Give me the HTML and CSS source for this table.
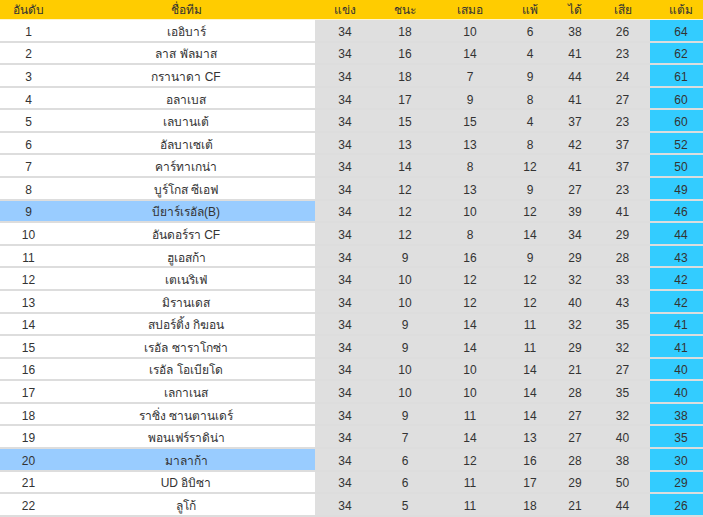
FILE: index.html
```html
<!DOCTYPE html>
<html lang="th">
<head>
<meta charset="utf-8">
<title>ตารางคะแนน</title>
<link rel="stylesheet" href="styles.css">
</head>
<body>
<div class="table">
  <div class="row head">
    <div class="c">อันดับ</div><div class="c">ชื่อทีม</div><div class="c">แข่ง</div><div class="c">ชนะ</div><div class="c">เสมอ</div><div class="c">แพ้</div><div class="c">ได้</div><div class="c">เสีย</div><div class="c">แต้ม</div>
  </div>
  <div class="row"><div class="c">1</div><div class="c">เออิบาร์</div><div class="c s">34</div><div class="c s">18</div><div class="c s">10</div><div class="c s">6</div><div class="c s">38</div><div class="c s">26</div><div class="c p">64</div></div>
  <div class="row"><div class="c">2</div><div class="c">ลาส พัลมาส</div><div class="c s">34</div><div class="c s">16</div><div class="c s">14</div><div class="c s">4</div><div class="c s">41</div><div class="c s">23</div><div class="c p">62</div></div>
  <div class="row"><div class="c">3</div><div class="c">กรานาดา CF</div><div class="c s">34</div><div class="c s">18</div><div class="c s">7</div><div class="c s">9</div><div class="c s">44</div><div class="c s">24</div><div class="c p">61</div></div>
  <div class="row"><div class="c">4</div><div class="c">อลาเบส</div><div class="c s">34</div><div class="c s">17</div><div class="c s">9</div><div class="c s">8</div><div class="c s">41</div><div class="c s">27</div><div class="c p">60</div></div>
  <div class="row"><div class="c">5</div><div class="c">เลบานเต้</div><div class="c s">34</div><div class="c s">15</div><div class="c s">15</div><div class="c s">4</div><div class="c s">37</div><div class="c s">23</div><div class="c p">60</div></div>
  <div class="row"><div class="c">6</div><div class="c">อัลบาเซเต้</div><div class="c s">34</div><div class="c s">13</div><div class="c s">13</div><div class="c s">8</div><div class="c s">42</div><div class="c s">37</div><div class="c p">52</div></div>
  <div class="row"><div class="c">7</div><div class="c">คาร์ทาเกน่า</div><div class="c s">34</div><div class="c s">14</div><div class="c s">8</div><div class="c s">12</div><div class="c s">41</div><div class="c s">37</div><div class="c p">50</div></div>
  <div class="row"><div class="c">8</div><div class="c">บูร์โกส ซีเอฟ</div><div class="c s">34</div><div class="c s">12</div><div class="c s">13</div><div class="c s">9</div><div class="c s">27</div><div class="c s">23</div><div class="c p">49</div></div>
  <div class="row hl"><div class="c">9</div><div class="c">บียาร์เรอัล(B)</div><div class="c s">34</div><div class="c s">12</div><div class="c s">10</div><div class="c s">12</div><div class="c s">39</div><div class="c s">41</div><div class="c p">46</div></div>
  <div class="row"><div class="c">10</div><div class="c">อันดอร์รา CF</div><div class="c s">34</div><div class="c s">12</div><div class="c s">8</div><div class="c s">14</div><div class="c s">34</div><div class="c s">29</div><div class="c p">44</div></div>
  <div class="row"><div class="c">11</div><div class="c">ฮูเอสก้า</div><div class="c s">34</div><div class="c s">9</div><div class="c s">16</div><div class="c s">9</div><div class="c s">29</div><div class="c s">28</div><div class="c p">43</div></div>
  <div class="row"><div class="c">12</div><div class="c">เตเนริเฟ่</div><div class="c s">34</div><div class="c s">10</div><div class="c s">12</div><div class="c s">12</div><div class="c s">32</div><div class="c s">33</div><div class="c p">42</div></div>
  <div class="row"><div class="c">13</div><div class="c">มิรานเดส</div><div class="c s">34</div><div class="c s">10</div><div class="c s">12</div><div class="c s">12</div><div class="c s">40</div><div class="c s">43</div><div class="c p">42</div></div>
  <div class="row"><div class="c">14</div><div class="c">สปอร์ติ้ง กิฆอน</div><div class="c s">34</div><div class="c s">9</div><div class="c s">14</div><div class="c s">11</div><div class="c s">32</div><div class="c s">35</div><div class="c p">41</div></div>
  <div class="row"><div class="c">15</div><div class="c">เรอัล ซาราโกซ่า</div><div class="c s">34</div><div class="c s">9</div><div class="c s">14</div><div class="c s">11</div><div class="c s">29</div><div class="c s">32</div><div class="c p">41</div></div>
  <div class="row"><div class="c">16</div><div class="c">เรอัล โอเบียโด</div><div class="c s">34</div><div class="c s">10</div><div class="c s">10</div><div class="c s">14</div><div class="c s">21</div><div class="c s">27</div><div class="c p">40</div></div>
  <div class="row"><div class="c">17</div><div class="c">เลกาเนส</div><div class="c s">34</div><div class="c s">10</div><div class="c s">10</div><div class="c s">14</div><div class="c s">28</div><div class="c s">35</div><div class="c p">40</div></div>
  <div class="row"><div class="c">18</div><div class="c">ราซิ่ง ซานตานเดร์</div><div class="c s">34</div><div class="c s">9</div><div class="c s">11</div><div class="c s">14</div><div class="c s">27</div><div class="c s">32</div><div class="c p">38</div></div>
  <div class="row"><div class="c">19</div><div class="c">พอนเฟร์ราดิน่า</div><div class="c s">34</div><div class="c s">7</div><div class="c s">14</div><div class="c s">13</div><div class="c s">27</div><div class="c s">40</div><div class="c p">35</div></div>
  <div class="row hl"><div class="c">20</div><div class="c">มาลาก้า</div><div class="c s">34</div><div class="c s">6</div><div class="c s">12</div><div class="c s">16</div><div class="c s">28</div><div class="c s">38</div><div class="c p">30</div></div>
  <div class="row"><div class="c">21</div><div class="c">UD อิบิซา</div><div class="c s">34</div><div class="c s">6</div><div class="c s">11</div><div class="c s">17</div><div class="c s">29</div><div class="c s">50</div><div class="c p">29</div></div>
  <div class="row"><div class="c">22</div><div class="c">ลูโก้</div><div class="c s">34</div><div class="c s">5</div><div class="c s">11</div><div class="c s">18</div><div class="c s">21</div><div class="c s">44</div><div class="c p">26</div></div>
</div>
</body>
</html>
```

FILE: styles.css
```css
html, body {
  margin: 0;
  padding: 0;
  background: #ffffff;
  overflow: hidden;
}
body {
  font-family: "Liberation Sans", Arial, sans-serif;
  font-size: 12px;
  color: #333333;
}
.table {
  width: 712px;
}
.row {
  display: grid;
  grid-template-columns: 57px 258px 60px 60px 70px 50px 40px 55px 62px;
  height: 22.59px;
  box-sizing: border-box;
  border-bottom: 2px solid #dddddd;
}
.row.head {
  height: 20px;
  background: #ffcc00;
  border-bottom: 1px solid #fff5cc;
}
.c {
  display: flex;
  align-items: center;
  justify-content: center;
  white-space: nowrap;
  line-height: 1;
  padding-top: 3px;
  box-sizing: border-box;
}
.head .c {
  color: #333333;
  padding-top: 1px;
}
.s {
  background: #dfdfdf;
}
.p {
  background: #33ccff;
}
.hl .c:nth-child(-n+2) {
  background: #99ccff;
}
```
